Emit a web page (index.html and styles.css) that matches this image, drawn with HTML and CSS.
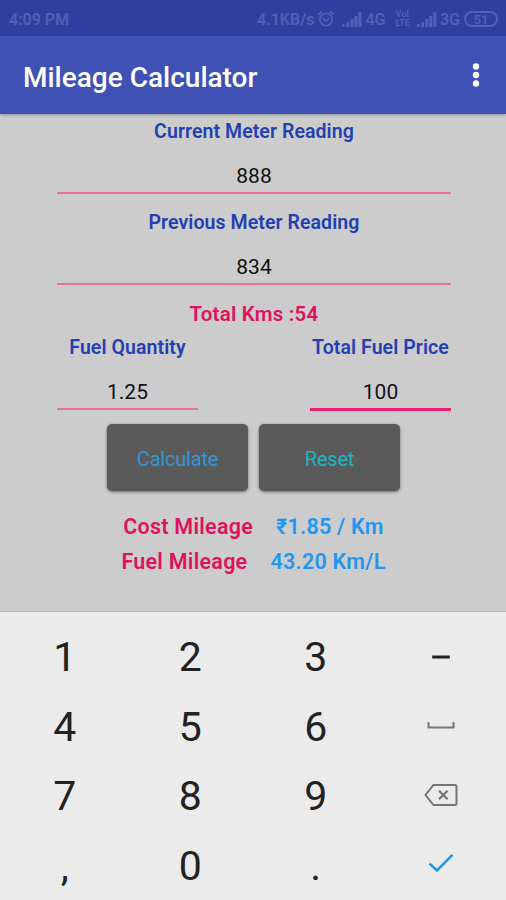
FILE: index.html
```html
<!DOCTYPE html>
<html lang="en">
<head>
  <meta charset="UTF-8" />
  <meta name="viewport" content="width=device-width, initial-scale=1.0"/>
  <title>Mileage Calculator</title>
  <link rel="stylesheet" href="styles.css">
</head>
<body>
  <div class="status-bar">
    <span class="time">4:09 PM</span>
    <div class="status-icons">
      <span class="speed">4.1KB/s</span>
      <svg class="alarm" width="18" height="18" viewBox="0 0 18 18">
        <circle cx="9" cy="9.5" r="6.2"/>
        <path d="M6 8.500l3 2.500 3-2.500M1.500 4.500L5 1.500M16.500 4.500L13 1.500"/>
      </svg>
      <svg class="signal" width="20" height="15" viewBox="0 0 20 15">
        <path d="M0 12h2.500v3H0zM4.500 10h2.500v5H4.500zM8.300 7h3v8h-3zM12.300 4h3v11h-3zM16.300 0h3v15h-3z"/>
      </svg>
      <span class="net">4G</span>
      <span class="volte"><span>VoI</span><span>LTE</span></span>
      <svg class="signal" width="20" height="15" viewBox="0 0 20 15">
        <path d="M0 12h2.500v3H0zM4.500 10h2.500v5H4.500zM8.300 7h3v8h-3zM12.300 4h3v11h-3zM16.300 0h3v15h-3z"/>
      </svg>
      <span class="net">3G</span>
      <span class="battery">51</span>
    </div>
  </div>

  <header class="app-bar">
    <h1>Mileage Calculator</h1>
    <svg class="menu" width="8" height="26" viewBox="0 0 8 26">
      <circle cx="4" cy="4.500" r="3.200"/>
      <circle cx="4" cy="13" r="3.200"/>
      <circle cx="4" cy="21.500" r="3.200"/>
    </svg>
  </header>

  <main class="content">
    <label for="current">Current Meter Reading</label>
    <input type="text" id="current" value="888">

    <label for="previous">Previous Meter Reading</label>
    <input type="text" id="previous" value="834">

    <p class="total">Total Kms :54</p>

    <div class="fuel-row">
      <div class="fuel-field">
        <label for="quantity">Fuel Quantity</label>
        <input type="text" id="quantity" value="1.25">
      </div>
      <div class="fuel-field">
        <label for="price">Total Fuel Price</label>
        <input type="text" id="price" class="active" value="100">
      </div>
    </div>

    <div class="buttons">
      <button class="calculate">Calculate</button>
      <button class="reset">Reset</button>
    </div>

    <div class="result cost">
      <span class="result-name">Cost Mileage</span>
      <span class="result-value">₹1.85 / Km</span>
    </div>
    <div class="result fuel">
      <span class="result-name">Fuel Mileage</span>
      <span class="result-value">43.20 Km/L</span>
    </div>
  </main>

  <div class="keypad">
    <div class="key">1</div>
    <div class="key">2</div>
    <div class="key">3</div>
    <div class="key">
      <svg width="34" height="24" viewBox="0 0 34 24"><path class="minus" d="M8.200 12h17.600"/></svg>
    </div>
    <div class="key">4</div>
    <div class="key">5</div>
    <div class="key">6</div>
    <div class="key">
      <svg width="34" height="24" viewBox="0 0 34 24"><path class="space" d="M4.500 7v5.500h25V7"/></svg>
    </div>
    <div class="key">7</div>
    <div class="key">8</div>
    <div class="key">9</div>
    <div class="key">
      <svg width="34" height="24" viewBox="0 0 34 24">
        <path class="backspace" d="M9.500 1h21.500q1.500 0 1.500 1.500v17q0 1.500-1.500 1.500H9.500L1.500 11z"/>
        <path class="backspace-x" d="M15 6.700l8.600 8.600M23.600 6.700L15 15.300"/>
      </svg>
    </div>
    <div class="key">,</div>
    <div class="key">0</div>
    <div class="key">.</div>
    <div class="key">
      <svg width="34" height="24" viewBox="0 0 34 24"><path class="check" d="M5.500 9.500l7.500 7L28.500 0.800"/></svg>
    </div>
  </div>
</body>
</html>
```
FILE: styles.css
```css
:root {
  --primary: #3f51b5;
  --primary-dark: #303f9f;
  --status: #5060b4;
  --label: #2440b0;
  --pink: #e0115f;
  --blue: #2196f3;
}

* {
  box-sizing: border-box;
}

body {
  margin: 0;
  height: 900px;
  display: flex;
  flex-direction: column;
  font-family: Roboto, sans-serif;
  background-color: #cccccc;
  overflow: hidden;
}

.status-bar {
  height: 36px;
  padding: 2px 8px 0 9px;
  display: flex;
  align-items: center;
  justify-content: space-between;
  background-color: var(--primary-dark);
  color: var(--status);
  font-size: 16px;
  font-weight: 600;
}

.status-icons {
  display: flex;
  align-items: center;
}

.speed {
  margin-right: 3px;
}

.alarm {
  fill: none;
  stroke: var(--status);
  stroke-width: 1.8;
  margin-right: 7px;
}

.signal {
  fill: var(--status);
  margin-right: 3px;
}

.volte {
  display: flex;
  flex-direction: column;
  font-size: 9px;
  line-height: 9px;
  margin: 0 7px 0 10px;
}

.battery {
  width: 34px;
  height: 16px;
  margin-left: 4px;
  border: 2px solid var(--status);
  border-radius: 8px;
  font-size: 13px;
  line-height: 13px;
  text-align: center;
}

.app-bar {
  height: 78px;
  padding: 0 26px 0 23px;
  display: flex;
  align-items: center;
  justify-content: space-between;
  background-color: var(--primary);
  box-shadow: 0 1px 3px rgba(0, 0, 0, 0.3);
}

h1 {
  margin: 4px 0 0;
  color: white;
  font-size: 28px;
  font-weight: 500;
}

.menu {
  fill: white;
}

.content {
  height: 498px;
  flex-shrink: 0;
  padding: 6px 55px 0 57px;
  border-bottom: 1px solid #bdbdbd;
}

label {
  display: block;
  color: var(--label);
  font-size: 19.5px;
  font-weight: 600;
  line-height: 24px;
  letter-spacing: 0.08px;
  text-align: center;
  white-space: nowrap;
}

input {
  display: block;
  width: 100%;
  height: 36px;
  margin: 14px 0 17px;
  padding: 2px 0 0;
  border: none;
  border-bottom: 2px solid #ec7096;
  background: none;
  color: #111;
  font-family: inherit;
  font-size: 21px;
  text-align: center;
  outline: none;
}

.total {
  margin: 0;
  color: var(--pink);
  font-size: 20.5px;
  font-weight: 600;
  line-height: 24px;
  letter-spacing: 0.2px;
  text-align: center;
}

.fuel-row {
  display: flex;
  justify-content: space-between;
  margin-top: 10px;
}

.fuel-field {
  width: 141px;
}

.fuel-field input {
  margin-bottom: 14px;
}

.fuel-field .active {
  height: 37px;
  margin-bottom: 13px;
  border-bottom: 3px solid #e91e74;
}

.buttons {
  display: flex;
  justify-content: center;
  gap: 11px;
  margin-left: -1px;
}

button {
  width: 141px;
  height: 67px;
  padding: 3px 0 0;
  border: none;
  border-radius: 5px;
  background-color: #5a5a5b;
  box-shadow: 0 1px 3px rgba(0, 0, 0, 0.5);
  font-family: inherit;
  font-size: 20px;
  letter-spacing: -0.2px;
}

.calculate {
  color: #2f97d6;
}

.reset {
  color: #1fb5c4;
}

.result {
  display: flex;
  justify-content: center;
  gap: 23px;
  margin: 11px 0 0 -1px;
  font-size: 21.5px;
  font-weight: 600;
  line-height: 24px;
  letter-spacing: 0.25px;
}

.cost {
  margin-top: 24px;
}

.result-name {
  color: var(--pink);
}

.result-value {
  color: var(--blue);
}

.keypad {
  height: 288px;
  flex-shrink: 0;
  padding: 10px 2px 0;
  display: grid;
  grid-template-columns: repeat(4, 1fr);
  grid-auto-rows: 69.7px;
  background-color: #ebebeb;
}

.key {
  display: flex;
  align-items: center;
  justify-content: center;
  color: #222;
  font-size: 41px;
}

.key svg {
  fill: none;
  stroke: #757575;
  stroke-width: 2;
}

.key .minus {
  stroke: #222;
  stroke-width: 3;
}

.key .backspace-x {
  stroke-width: 2.2;
}

.key .check {
  stroke: #1e9be0;
  stroke-width: 2.5;
}
```
